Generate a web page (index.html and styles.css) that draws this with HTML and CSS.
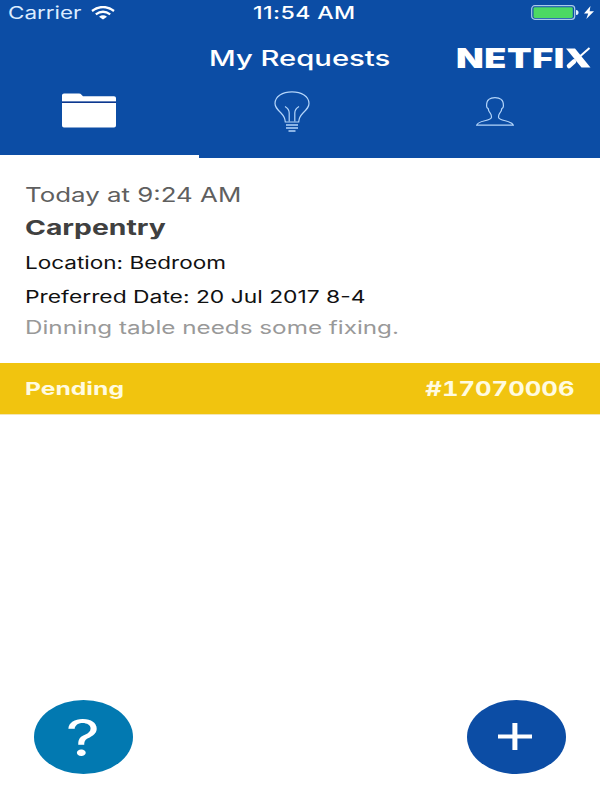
FILE: index.html
```
<!DOCTYPE html>
<html lang="en">
<head>
<meta charset="utf-8">
<title>My Requests</title>
<link rel="stylesheet" href="styles.css">
</head>
<body>
<main class="screen">
  <header class="header">
    <div class="status">
      <div class="carrier"><span class="wide carrier-name">Carrier</span></div>
      <svg class="wifi" viewBox="0 0 24 14" width="24" height="14"><g fill="none" stroke="#fff" stroke-width="2.3"><path d="M1 5Q12-3 23 5"/><path d="M4.8 8.4Q12 3 19.2 8.4"/></g><path fill="#fff" d="M8 10.7Q12 7.8 16 10.7L12 13.5Z"/></svg>
      <span class="wide time">11:54 AM</span>
      <svg class="battery" viewBox="0 0 64 16" width="64" height="16"><rect x=".7" y=".7" width="43" height="13.6" rx="3" fill="none" stroke="#a9cbe8" stroke-width="1.2"/><rect x="2.5" y="2.3" width="39.3" height="10.6" rx="1.3" fill="#4cd964"/><path fill="#e5f4ff" d="M45 5q2.5 0 2.5 2.5T45 10z"/><path fill="#fff" d="M59.5 1L53 8.6h4.2L55.3 14 63 6.3h-4.4z"/></svg>
    </div>
    <div class="titlebar">
      <h1 class="wide title">My Requests</h1>
      <div class="brand"><span class="wide brand-name">NETFI<span class="brand-x">X</span></span><svg class="brand-tool" viewBox="0 0 27 24" width="27" height="24"><path fill="#fff" d="M2 2.5H11L26.5 21.5H17.5Z"/><path stroke="#fff" stroke-width="2" d="M25.5 2L13 13"/><path stroke="#fff" stroke-width="4.5" stroke-linecap="round" d="M10 15.5L5 20"/></svg></div>
    </div>
    <nav class="tabs">
      <a class="tab folder"><svg viewBox="0 0 54 35" width="54" height="35"><path fill="#fff" d="M0 8.5V2.2Q0 .5 2 .5H17Q18.7.5 19.5 1.7L21 3.3H52Q54 3.3 54 5V8.5ZM0 9.9H54V32.5Q54 34.5 52 34.5H2Q0 34.5 0 32.5Z"/><path stroke="#102f86" d="M0 9.2H54"/></svg></a>
      <a class="tab bulb"><svg viewBox="0 0 36 41" width="36" height="41" fill="none" stroke="#b4d5fa" stroke-width="1.2"><path d="M11.3 31Q11 26 7 22C3 18 1 16 1 12.5C1 5.5 8.5.8 18 .8S35 5.5 35 12.5C35 16 33 18 29 22Q25 26 24.7 31Z"/><path d="M11 15.5Q15.2 18 15.2 22V30.5M25 15.5Q20.8 18 20.8 22V30.5"/><path d="M12 34H24M12 37H24M14.5 40H21.5" stroke-width="1.4"/></svg></a>
      <a class="tab person"><svg viewBox="0 0 38 29" width="38" height="29" fill="none" stroke="#b4d5fa" stroke-width="1.2"><path d="M.7 28.2C2 23 15 24.5 15.5 20.2Q15.6 18 14.2 16.2Q12.4 14 12.2 11.6Q10.4 11 10.6 8.5Q10.6 4 12.8 2.4Q15 .7 19 .7T25.2 2.4Q27.4 4 27.4 8.5Q27.6 11 25.8 11.6Q25.6 14 23.8 16.2Q22.4 18 22.5 20.2C23 24.5 36 23 37.3 28.2Z"/></svg></a>
    </nav>
    <div class="indicator"></div>
  </header>
  <article class="request">
    <div class="line l-date"><span class="wide t-date">Today at 9:24 AM</span></div>
    <div class="line l-type"><strong class="wide t-type">Carpentry</strong></div>
    <div class="line l-location"><span class="wide t-location">Location: Bedroom</span></div>
    <div class="line l-preferred"><span class="wide t-preferred">Preferred Date: 20 Jul 2017 8-4</span></div>
    <div class="line l-note"><span class="wide t-note">Dinning table needs some fixing.</span></div>
  </article>
  <div class="state">
    <span class="wide pending">Pending</span>
    <span class="wide number">#17070006</span>
  </div>
  <footer class="actions">
    <button class="round help"><span class="question">?</span></button>
    <button class="round add"><svg viewBox="0 0 34 27" width="34" height="27"><path fill="#fff" d="M14.4 0h5V11.5H34v4H19.4V27h-5V15.5H0v-4H14.4z"/></svg></button>
  </footer>
</main>
</body>
</html>
```
FILE: styles.css
```
* { box-sizing: border-box; }
body { margin: 0; background: #fff; font-family: Inter, "Liberation Sans", sans-serif; }
.screen { width: 600px; height: 800px; display: flex; flex-direction: column; overflow: hidden; }
.header { height: 158px; flex: none; background: #0c4da5; color: #fff; display: flex; flex-direction: column; }
.wide { display: inline-block; white-space: nowrap; transform-origin: left center; transform: scaleX(1.3); }
.status { height: 25px; display: grid; grid-template-columns: 91px 24px 1fr 64px; padding-right: 5px; align-items: center; }
.carrier { padding-left: 8px; }
.carrier-name { font-size: 17px; line-height: 24px; color: #dcecff; transform: scaleX(1.32); }
.time { margin-left: 138px; justify-self: start; font-size: 17px; font-weight: 500; line-height: 24px; letter-spacing: .3px; transform: scaleX(1.36); }
.titlebar { height: 64px; display: flex; justify-content: space-between; padding: 17px 9px 0 209px; }
.title { margin: 0; font-size: 21.5px; font-weight: 500; line-height: 32px; height: 32px; transform: scaleX(1.36); }
.brand { position: relative; width: 134px; height: 32px; }
.brand-name { font-size: 26.5px; font-weight: 900; line-height: 32px; letter-spacing: .4px; transform: scaleX(1.36); margin-left: -1px; }
.brand-x { color: #0c4da5; }
.brand-tool { position: absolute; right: 0; top: 4px; }
.tabs { height: 66px; flex: none; display: grid; grid-template-columns: repeat(3, 1fr); }
.tab { display: flex; }
.tab svg { display: block; }
.folder { padding: 4px 0 0 62px; }
.bulb { padding: 2px 0 0 74px; }
.person { padding: 8px 0 0 76px; }
.indicator { height: 3px; width: 199px; background: #fff; }
.request { height: 205px; flex: none; padding: 20px 25px 0; }
.line { display: flex; align-items: center; }
.l-date { height: 34px; }
.l-type { height: 30px; }
.l-location { height: 41px; }
.l-preferred { height: 27px; }
.l-note { height: 34px; }
.t-date { font-size: 20px; color: #5f5f5f; transform: scaleX(1.293); }
.t-type { font-size: 20.5px; font-weight: 700; color: #404040; transform: scaleX(1.38); }
.t-location, .t-preferred { font-size: 17px; color: #111; transform: scaleX(1.325); }
.t-preferred { transform: scaleX(1.343); }
.t-note { font-size: 18px; color: #999; transform: scaleX(1.347); }
.state { height: 52px; flex: none; display: flex; justify-content: space-between; align-items: center; padding: 0 25px; background: #f1c40f; border-bottom: 1px solid #f3e6b5; color: #fffbe0; font-weight: 700; }
.pending { font-size: 18px; transform: scaleX(1.37); }
.number { font-size: 19.5px; font-variant-numeric: tabular-nums; transform-origin: right center; transform: scaleX(1.315); }
.actions { margin-top: auto; padding: 0 34px 26px; display: flex; justify-content: space-between; }
.round { width: 99px; height: 74px; border: 0; border-radius: 50%; padding: 0; display: flex; align-items: center; justify-content: center; color: #fff; font-family: inherit; }
.help { background: #0279b1; }
.add { background: #0c4da5; }
.add svg { margin: 0 3px 2px 0; }
.question { font-size: 50px; font-weight: 400; line-height: 60px; margin: 2px 1px 0 0; transform: scaleX(1.34); }
```
